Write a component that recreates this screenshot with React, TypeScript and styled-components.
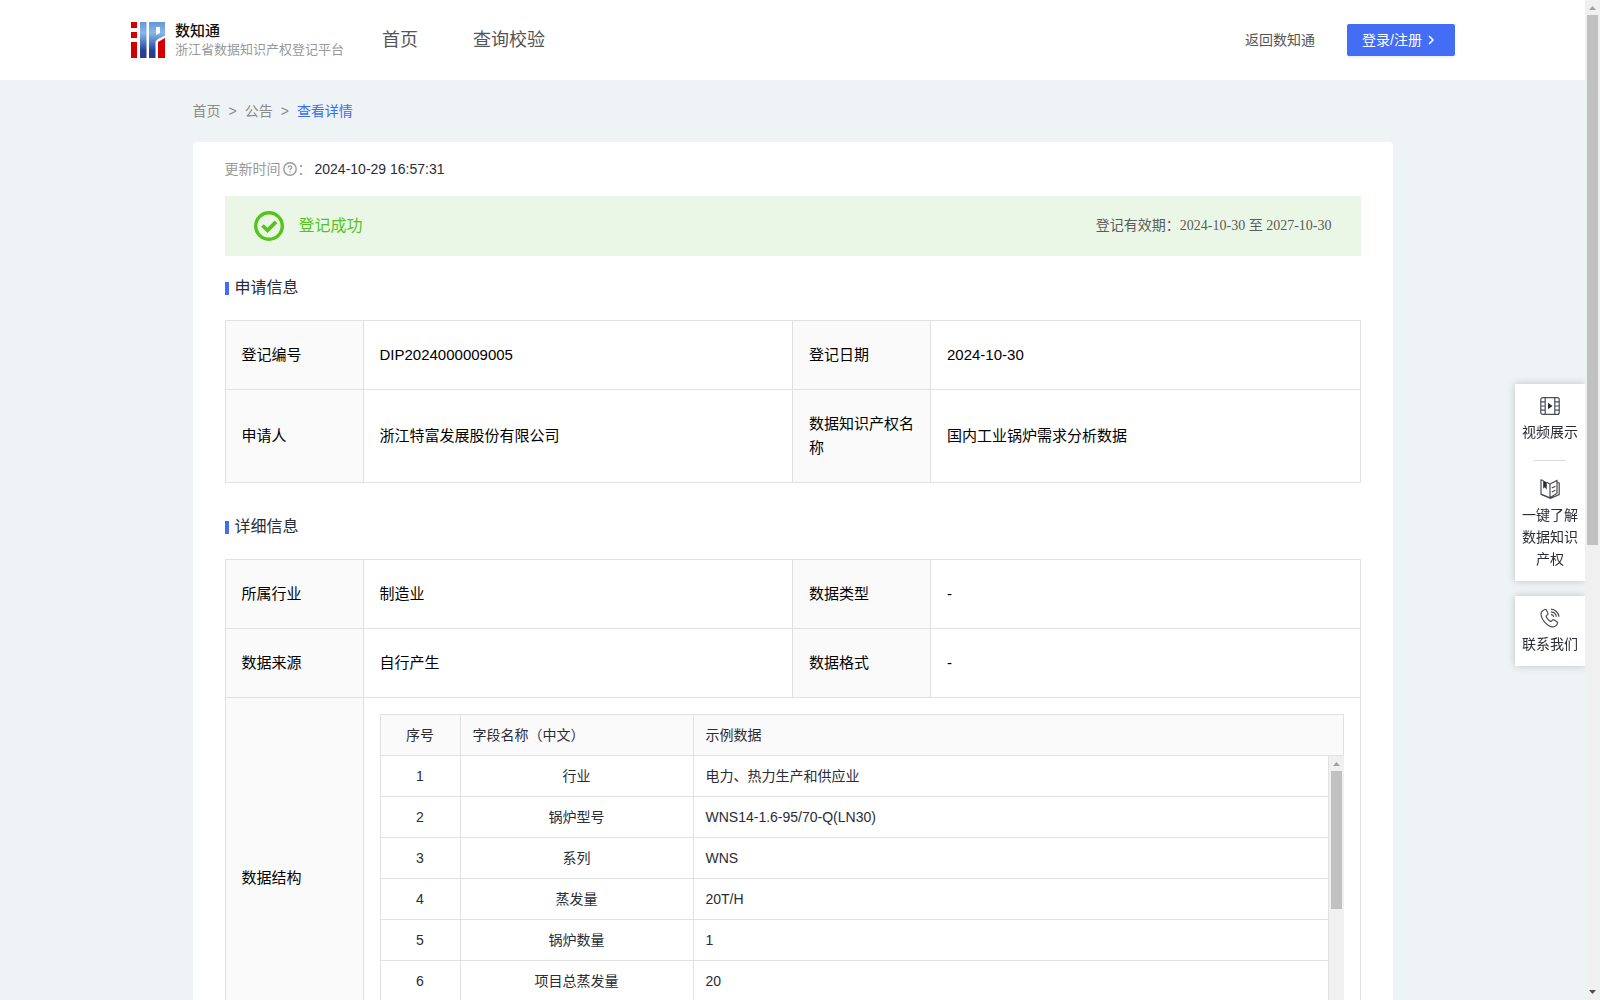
import React from "react";
import styled, { createGlobalStyle, css } from "styled-components";

const sans = `"Liberation Sans", "Noto Sans CJK SC", sans-serif`;
const serif = `"Liberation Serif", "Noto Sans CJK SC", serif`;
const line = "#e1e1e1";
const blue = "#446df6";

const GlobalStyle = createGlobalStyle`
  *, *::before, *::after { box-sizing: border-box; }
  body { margin: 0; font-family: ${sans}; color: #2a2c38; background: #eef3f6; }
  a { color: inherit; text-decoration: none; }
  button { font: inherit; }
`;

const Window = styled.div`
  display: grid;
  grid-template-columns: minmax(0, 1fr) 15px;
  height: 100vh;
`;

const Page = styled.div`
  overflow-y: auto;
  scrollbar-width: none;
`;

/* ---------- scroll bar ---------- */
const Track = styled.div`
  display: flex;
  flex-direction: column;
  align-items: center;
  width: 15px;
  background: #f0f0f0;
`;
const Arrow = styled.svg`
  flex: none;
  display: block;
  width: 15px;
  height: 15px;
`;
const ThumbArea = styled.div`
  flex: 1;
  width: 11px;
`;
const Thumb = styled.div<{ $size: string }>`
  height: ${(p) => p.$size};
  background: #c1c1c1;
`;

function ScrollBar({ size }: { size: string }) {
  return (
    <Track aria-hidden="true">
      <Arrow viewBox="0 0 15 15">
        <path d="M4 10h7L7.500 6z" fill="#a3a3a3" />
      </Arrow>
      <ThumbArea>
        <Thumb $size={size} />
      </ThumbArea>
      <Arrow viewBox="0 0 15 15">
        <path d="M4 5h7L7.500 9z" fill="#505050" />
      </Arrow>
    </Track>
  );
}

/* ---------- header ---------- */
const Header = styled.header`
  display: flex;
  align-items: center;
  height: 80px;
  padding: 0 130px;
  background: #fff;
`;
const Brand = styled.a`
  display: flex;
  align-items: center;
  gap: 10px;
`;
const BrandName = styled.strong`
  display: block;
  font-size: 15px;
  line-height: 20px;
  font-weight: 500;
  color: #111;
`;
const BrandSub = styled.span`
  display: block;
  font-size: 13px;
  line-height: 18px;
  color: #999;
`;
const Nav = styled.nav`
  display: flex;
  gap: 55px;
  margin-left: 38px;
  font-size: 18px;
  line-height: 28px;
  color: #555;
`;
const Account = styled.div`
  display: flex;
  align-items: center;
  gap: 32px;
  margin-left: auto;
  font-size: 14px;
  line-height: 22px;
  color: #555;
`;
const LoginButton = styled.button`
  display: flex;
  align-items: center;
  gap: 4px;
  width: 108px;
  height: 32px;
  padding: 0 15px;
  border: 0;
  border-radius: 2px;
  color: #fff;
  background: ${blue};
  box-shadow: 0 2px 0 rgba(0, 0, 0, 0.05);
  white-space: nowrap;
`;

function Logo() {
  return (
    <svg width="35" height="36" viewBox="0 0 35 36" aria-hidden="true">
      <defs>
        <linearGradient id="logoBlue" x1="0" y1="0" x2="0" y2="36" gradientUnits="userSpaceOnUse">
          <stop offset="0" stopColor="#6795d6" />
          <stop offset="0.3" stopColor="#86b8ea" />
          <stop offset="0.6" stopColor="#4a72bd" />
          <stop offset="0.8" stopColor="#26418f" />
          <stop offset="1" stopColor="#263f8c" />
        </linearGradient>
      </defs>
      <path d="M1 0h6v6H1zM1 10h6v6H1zM1 20h6v16H1z" fill="#d40000" />
      <path d="M10 0h6.500v36H10z" fill="url(#logoBlue)" />
      <path d="M19 0h16v13.500L28 17l-2.500 2.500V36H19zM26 5v8l4-2V5z" fill="url(#logoBlue)" fillRule="evenodd" />
      <path d="M28 20l7-4v20h-7z" fill="#d40000" />
    </svg>
  );
}

/* ---------- content ---------- */
const Main = styled.main`
  max-width: 1200px;
  margin: 0 auto;
`;
const Crumbs = styled.nav`
  display: flex;
  gap: 8px;
  padding: 20px 0;
  font-size: 14px;
  line-height: 22px;
  color: #8a8a8a;
`;
const CurrentCrumb = styled.a`
  color: #3a6cf6;
`;
const Card = styled.section`
  padding: 16px 32px 32px;
  border-radius: 4px;
  background: #fff;
`;
const Updated = styled.div`
  display: flex;
  align-items: center;
  margin-bottom: 16px;
  font-size: 14px;
  line-height: 22px;
  color: #999;
`;
const UpdatedTime = styled.time`
  margin-left: 3px;
  color: #2a2c38;
`;
const HelpIcon = styled.svg`
  margin: 0 1px 0 2px;
`;
const Banner = styled.div`
  display: flex;
  align-items: center;
  gap: 15px;
  height: 60px;
  padding: 0 29px;
  background: #ebf7e6;
`;
const BannerState = styled.strong`
  font-size: 16px;
  line-height: 24px;
  font-weight: 400;
  color: #52c41a;
`;
const Validity = styled.span`
  margin-left: auto;
  font-family: ${serif};
  font-size: 14px;
  line-height: 22px;
  color: #5a5c5a;
`;
const SectionTitle = styled.h2`
  display: flex;
  align-items: center;
  gap: 6px;
  margin: 20px 0;
  font-size: 16px;
  line-height: 24px;
  font-weight: 400;

  &::before {
    content: "";
    width: 4px;
    height: 13px;
    background: ${blue};
  }
`;

const tableBase = css`
  width: 100%;
  table-layout: fixed;
  border-collapse: separate;
  border-spacing: 0;
`;
const InfoTable = styled.table`
  ${tableBase}
  margin-bottom: 32px;
  border-top: 1px solid ${line};
  border-left: 1px solid ${line};
  font-size: 15px;
  line-height: 24px;
  color: #000;
`;
const Label = styled.th`
  padding: 22px 16px;
  border-right: 1px solid ${line};
  border-bottom: 1px solid ${line};
  background: #fafafa;
  font-weight: 400;
  text-align: left;
`;
const Value = styled.td<{ $nested?: boolean }>`
  padding: ${(p) => (p.$nested ? "16px" : "22px 16px")};
  border-right: 1px solid ${line};
  border-bottom: 1px solid ${line};
`;
const LabelCol = styled.col`
  width: 138px;
`;

const FieldTable = styled.table<{ $head?: boolean }>`
  ${tableBase}
  border-left: 1px solid ${line};
  border-top: ${(p) => (p.$head ? `1px solid ${line}` : "0")};
  font-size: 14px;
  line-height: 24px;
  color: #2a2c38;
`;
const IndexCol = styled.col`
  width: 80px;
`;
const NameCol = styled.col`
  width: 233px;
`;
const cell = css<{ $center?: boolean }>`
  padding: 8px 12px;
  border-right: 1px solid ${line};
  border-bottom: 1px solid ${line};
  text-align: ${(p) => (p.$center ? "center" : "left")};
`;
const FieldHead = styled.th<{ $center?: boolean }>`
  ${cell}
  background: #fafafa;
  font-weight: 400;
`;
const FieldCell = styled.td<{ $center?: boolean }>`
  ${cell}
`;
const FieldBody = styled.div`
  display: grid;
  grid-template-columns: minmax(0, 1fr) 15px;
  height: 286px;
`;

/* ---------- floating side bar ---------- */
const SideBar = styled.aside`
  position: fixed;
  top: 384px;
  right: 15px;
  display: flex;
  flex-direction: column;
  gap: 15px;
  width: 70px;
`;
const SideGroup = styled.div`
  padding: 12px 0 11px;
  background: #fff;
  box-shadow: 0 0 8px rgba(0, 0, 0, 0.2);
  clip-path: inset(-10px 0 -10px -10px);
`;
const SideLink = styled.a`
  display: flex;
  flex-direction: column;
  align-items: center;
  gap: 5px;
  padding: 0 7px;
  font-size: 14px;
  line-height: 22px;
  text-align: center;
`;
const Divider = styled.hr`
  width: 32px;
  height: 1px;
  margin: 17px auto 18px;
  border: 0;
  background: #dcdcdc;
`;

const iconProps = {
  width: 20,
  height: 20,
  viewBox: "0 0 20 20",
  fill: "none",
  stroke: "#4a4c56",
  strokeWidth: 1.2,
  "aria-hidden": true,
} as const;

const VideoIcon = () => (
  <svg {...iconProps}>
    <rect x="0.8" y="1.600" width="18.400" height="16.800" rx="2" />
    <path d="M5.200 1.600v16.800M14.800 1.600v16.800M.8 5.800h4.400M.8 10h4.400M.8 14.200h4.400M14.800 5.800h4.400M14.800 10h4.400M14.800 14.200h4.400" />
    <path d="M8 6.800v6.400l4.600-3.200z" fill="#2a2c38" stroke="none" />
  </svg>
);
const BookIcon = () => (
  <svg {...iconProps}>
    <path d="M3.500 1.500L1 1v14l9 3.700V5L6.800 3.200M10 5l7-3.500v12.700L10 18.700M17.200 3.500l2 .4v11.600L10.500 19.400 1 15.500" />
    <path d="M3.200 1.500v8l1.700-1.300 1.800 2.600V3.200z" fill="#2a2c38" stroke="none" />
    <path d="M11.800 9l3.600-1.800M11.800 13l3.600-1.800" />
  </svg>
);
const PhoneIcon = () => (
  <svg {...iconProps}>
    <path d="M4.800 1.500C2 2.500.6 4.800 1.200 7.600c1 4.700 5.400 9.700 9.800 11 3 .9 5.800-.6 6.500-3.300.2-.7-.1-1.200-.6-1.600l-2.600-1.800c-.6-.4-1.300-.3-1.800.2l-.9 1c-.4.4-.9.5-1.400.2-1.700-1.100-3-2.600-3.900-4.300-.3-.5-.2-1 .2-1.400l1.100-1c.5-.5.5-1.100.2-1.700L6.400 2.100c-.4-.6-.9-.8-1.600-.6z" />
    <path d="M11 1.200c4.300.2 7.600 3.400 7.900 7.600M11 3.800c2.900.2 5 2.200 5.300 5M11 6.300c1.500.2 2.500 1.100 2.700 2.500" />
  </svg>
);

const fields = [
  ["行业", "电力、热力生产和供应业"],
  ["锅炉型号", "WNS14-1.6-95/70-Q(LN30)"],
  ["系列", "WNS"],
  ["蒸发量", "20T/H"],
  ["锅炉数量", "1"],
  ["项目总蒸发量", "20"],
];

const applicationRows = [
  ["登记编号", "DIP2024000009005", "登记日期", "2024-10-30"],
  ["申请人", "浙江特富发展股份有限公司", "数据知识产权名称", "国内工业锅炉需求分析数据"],
];
const detailRows = [
  ["所属行业", "制造业", "数据类型", "-"],
  ["数据来源", "自行产生", "数据格式", "-"],
];

const InfoColumns = () => (
  <colgroup>
    <LabelCol />
    <col />
    <LabelCol />
    <col />
  </colgroup>
);

function InfoRows({ rows }: { rows: string[][] }) {
  return (
    <>
      {rows.map(([a, b, c, d]) => (
        <tr key={a}>
          <Label scope="row">{a}</Label>
          <Value>{b}</Value>
          <Label scope="row">{c}</Label>
          <Value>{d}</Value>
        </tr>
      ))}
    </>
  );
}

const FieldColumns = () => (
  <colgroup>
    <IndexCol />
    <NameCol />
    <col />
  </colgroup>
);

export default function App() {
  return (
    <Window>
      <GlobalStyle />
      <Page>
        <Header>
          <Brand href="#">
            <Logo />
            <span>
              <BrandName>数知通</BrandName>
              <BrandSub>浙江省数据知识产权登记平台</BrandSub>
            </span>
          </Brand>
          <Nav>
            <a href="#">首页</a>
            <a href="#">查询校验</a>
          </Nav>
          <Account>
            <a href="#">返回数知通</a>
            <LoginButton type="button">
              登录/注册
              <svg width="10" height="10" viewBox="0 0 10 10" fill="none" aria-hidden="true">
                <path d="M3 1l4 4-4 4" stroke="#fff" strokeWidth="1.500" />
              </svg>
            </LoginButton>
          </Account>
        </Header>

        <Main>
          <Crumbs>
            <a href="#">首页</a>
            <span>&gt;</span>
            <a href="#">公告</a>
            <span>&gt;</span>
            <CurrentCrumb href="#">查看详情</CurrentCrumb>
          </Crumbs>

          <Card>
            <Updated>
              更新时间
              <HelpIcon width="14" height="14" viewBox="0 0 14 14" fill="none" stroke="#999" aria-hidden="true">
                <circle cx="7" cy="7" r="6.200" strokeWidth="1.400" />
                <path d="M5.200 5.600c0-2.300 3.600-2.300 3.600-.1 0 1.300-1.800 1.300-1.800 2.700M7 9.200v1.300" strokeWidth="1.300" />
              </HelpIcon>
              ：
              <UpdatedTime>2024-10-29 16:57:31</UpdatedTime>
            </Updated>

            <Banner>
              <svg width="30" height="30" viewBox="0 0 30 30" fill="none" stroke="#52c41a" aria-hidden="true">
                <circle cx="15" cy="15" r="13.300" strokeWidth="3.400" />
                <path d="M8.500 14.500l5 4.800 8.500-8.500" strokeWidth="3.800" />
              </svg>
              <BannerState>登记成功</BannerState>
              <Validity>登记有效期：2024-10-30 至 2027-10-30</Validity>
            </Banner>

            <SectionTitle>申请信息</SectionTitle>
            <InfoTable>
              <InfoColumns />
              <tbody>
                <InfoRows rows={applicationRows} />
              </tbody>
            </InfoTable>

            <SectionTitle>详细信息</SectionTitle>
            <InfoTable>
              <InfoColumns />
              <tbody>
                <InfoRows rows={detailRows} />
                <tr>
                  <Label scope="row">数据结构</Label>
                  <Value $nested colSpan={3}>
                    <FieldTable $head>
                      <FieldColumns />
                      <thead>
                        <tr>
                          <FieldHead $center>序号</FieldHead>
                          <FieldHead>字段名称（中文）</FieldHead>
                          <FieldHead>示例数据</FieldHead>
                        </tr>
                      </thead>
                    </FieldTable>
                    <FieldBody>
                      <div>
                        <FieldTable>
                          <FieldColumns />
                          <tbody>
                            {fields.map(([name, sample], i) => (
                              <tr key={name}>
                                <FieldCell $center>{i + 1}</FieldCell>
                                <FieldCell $center>{name}</FieldCell>
                                <FieldCell>{sample}</FieldCell>
                              </tr>
                            ))}
                          </tbody>
                        </FieldTable>
                      </div>
                      <ScrollBar size="54%" />
                    </FieldBody>
                  </Value>
                </tr>
              </tbody>
            </InfoTable>
          </Card>
        </Main>
      </Page>

      <ScrollBar size="530px" />

      <SideBar>
        <SideGroup>
          <SideLink href="#">
            <VideoIcon />
            视频展示
          </SideLink>
          <Divider />
          <SideLink href="#">
            <BookIcon />
            一键了解数据知识产权
          </SideLink>
        </SideGroup>
        <SideGroup>
          <SideLink href="#">
            <PhoneIcon />
            联系我们
          </SideLink>
        </SideGroup>
      </SideBar>
    </Window>
  );
}
